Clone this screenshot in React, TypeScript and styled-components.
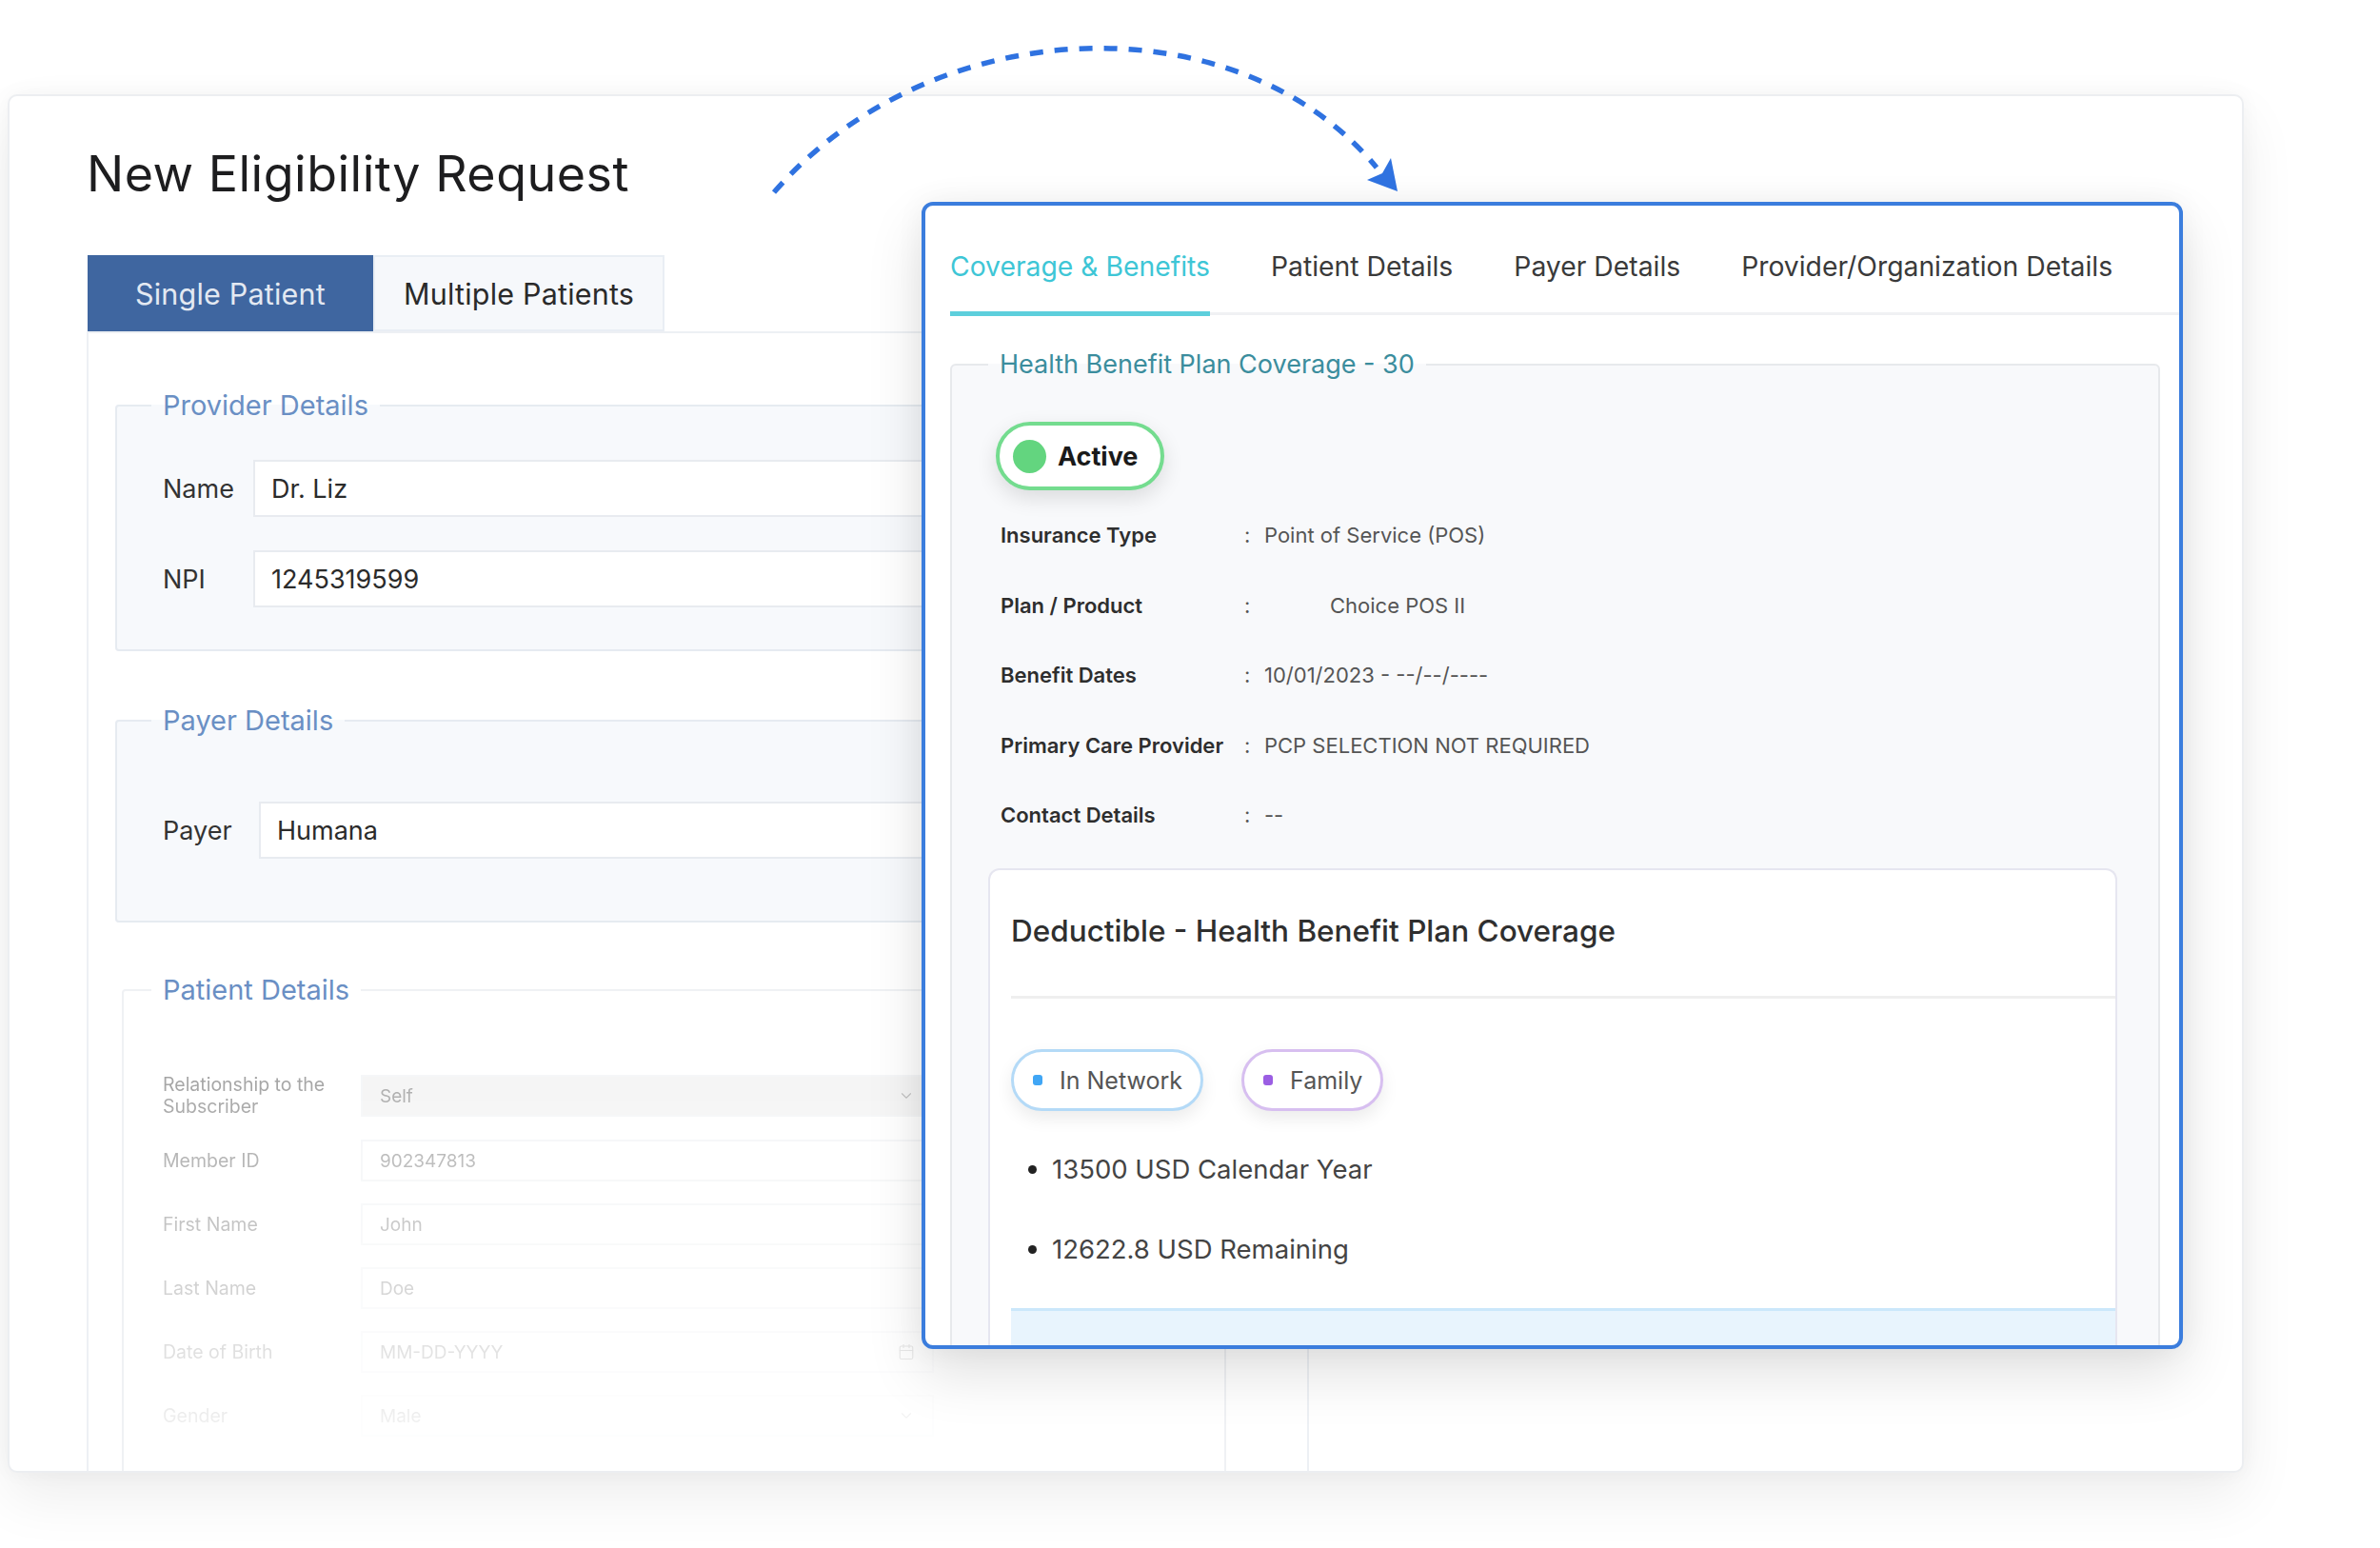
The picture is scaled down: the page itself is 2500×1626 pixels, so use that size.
import React from "react";
import styled, { createGlobalStyle } from "styled-components";
import { ChevronDown, Calendar } from "lucide-react";

const GlobalStyle = createGlobalStyle`
  html, body { margin: 0; padding: 0; background: #ffffff; }
  body { font-family: Inter, "Noto Sans", "Liberation Sans", sans-serif; }
  * { box-sizing: border-box; }
`;

const Page = styled.div`
  position: relative;
  width: 2500px;
  height: 1626px;
  overflow: hidden;
  padding: 99px 0 0 8px;
  background: #fff;
`;

const Card = styled.div`
  width: 2349px;
  height: 1448px;
  border: 2px solid #eceef1;
  border-radius: 10px;
  background: #fff;
  box-shadow: 0 26px 60px rgba(0, 0, 0, 0.07), 0 0 22px rgba(0, 0, 0, 0.04);
  padding: 51px 0 0 81px;
  overflow: hidden;
  display: flex;
  flex-direction: column;
`;

const Title = styled.h1`
  margin: 0;
  font-size: 52px;
  font-weight: 400;
  line-height: 62px;
  color: #1d1d1f;
  letter-spacing: 0.5px;
`;

const TabBar = styled.div`
  display: flex;
  margin: 54px 0 0 1px;
`;

const Tab = styled.div<{ $active?: boolean }>`
  min-width: 300px;
  height: 80px;
  padding: 0 30px;
  display: flex;
  align-items: center;
  justify-content: center;
  font-size: 30.5px;
  letter-spacing: 0.2px;
  background: ${(p) => (p.$active ? "#3f66a0" : "#f6f8fb")};
  color: ${(p) => (p.$active ? "#e3e9f2" : "#2a2a2a")};
  border: ${(p) => (p.$active ? "none" : "2px solid #e9eef4")};
`;

const FormPanel = styled.div`
  width: 1284px;
  flex: 1;
  border: 2px solid #edf0f4;
  border-bottom: none;
  padding: 59px 85px 0 28px;
  display: flex;
  flex-direction: column;
`;

const Fieldset = styled.fieldset<{ $plain?: boolean; $gap?: number; $indent?: number }>`
  margin: ${(p) => p.$gap ?? 0}px 0 0 ${(p) => p.$indent ?? 0}px;
  border: 2px solid ${(p) => (p.$plain ? "#eff1f4" : "#e6ebf1")};
  border-radius: 4px;
  background: ${(p) => (p.$plain ? "#ffffff" : "#f7f9fc")};
  padding: 0 0 0 ${(p) => 48 - (p.$indent ?? 0)}px;
  min-width: 0;
`;

const Legend = styled.legend`
  font-size: 29px;
  line-height: 34px;
  color: #6a8fc4;
  padding: 0 12px;
  margin-left: -12px;
`;

const FieldGrid = styled.div<{ $label: number; $top: number; $bottom: number }>`
  display: grid;
  grid-template-columns: ${(p) => p.$label}px 1fr;
  row-gap: 35px;
  align-items: center;
  padding: ${(p) => p.$top}px 0 ${(p) => p.$bottom}px 0;
`;

const FieldLabel = styled.div`
  font-size: 27px;
  color: #333;
`;

const TextBox = styled.div`
  height: 60px;
  border: 2px solid #e8ebf0;
  background: #fff;
  padding: 0 17px;
  display: flex;
  align-items: center;
  font-size: 27px;
  color: #2b2b2b;
`;

const PatientGrid = styled.div`
  display: grid;
  grid-template-columns: 208px 602px;
  row-gap: 23px;
  align-items: center;
  padding: 71px 0 40px 0;
  -webkit-mask-image: linear-gradient(to bottom, rgba(0, 0, 0, 0.62), rgba(0, 0, 0, 0.08) 92%);
  mask-image: linear-gradient(to bottom, rgba(0, 0, 0, 0.62), rgba(0, 0, 0, 0.08) 92%);
`;

const SmallLabel = styled.div`
  font-size: 19.5px;
  line-height: 23px;
  color: #555;
`;

const SmallBox = styled.div<{ $filled?: boolean }>`
  height: 44px;
  border: 2px solid #eceef1;
  background: ${(p) => (p.$filled ? "#ececec" : "#fff")};
  padding: 0 18px 0 18px;
  display: flex;
  align-items: center;
  justify-content: space-between;
  font-size: 19px;
  color: #666;
`;

/* ---------- Result panel ---------- */

const ResultPanel = styled.div`
  position: absolute;
  left: 968px;
  top: 212px;
  width: 1325px;
  height: 1205px;
  border: 4px solid #3b7ddd;
  border-radius: 12px;
  background: #fff;
  box-shadow: 0 26px 60px rgba(0, 0, 0, 0.12), 0 0 30px rgba(0, 0, 0, 0.05);
  overflow: hidden;
  display: flex;
  flex-direction: column;
`;

const PanelTabs = styled.div`
  display: flex;
  gap: 64px;
  margin-left: 26px;
  padding-top: 47px;
  border-bottom: 3px solid #f0f1f3;
`;

const PanelTab = styled.div<{ $active?: boolean }>`
  font-size: 28.3px;
  line-height: 34px;
  padding-bottom: 30px;
  margin-bottom: -4px;
  color: ${(p) => (p.$active ? "#3ec6d6" : "#3a3a3a")};
  border-bottom: 5px solid ${(p) => (p.$active ? "#5dcfdc" : "transparent")};
`;

const CoverageBox = styled.fieldset`
  flex-shrink: 0;
  height: 1100px;
  margin: 35px 20px 0 26px;
  border: 2px solid #e7e9ec;
  border-radius: 6px;
  background: #f8f9fb;
  padding: 0 0 0 46px;
  min-width: 0;
  display: flex;
  flex-direction: column;
`;

const CoverageLegend = styled.legend`
  font-size: 27px;
  line-height: 34px;
  color: #3b8d9d;
  padding: 0 12px;
  margin-left: -8px;
`;

const ActivePill = styled.div`
  align-self: flex-start;
  margin-top: 43px;
  height: 72px;
  display: inline-flex;
  align-items: center;
  gap: 12px;
  padding: 0 24px 0 14px;
  border: 4px solid #74dc8f;
  border-radius: 40px;
  background: #fff;
  box-shadow: 0 8px 22px rgba(0, 0, 0, 0.12);
  font-size: 27px;
  font-weight: 700;
  color: #1a1a1a;
`;

const GreenDot = styled.span`
  width: 35px;
  height: 35px;
  border-radius: 50%;
  background: #63d57f;
`;

const InfoGrid = styled.div`
  display: grid;
  grid-template-columns: 256px 21px 1fr;
  row-gap: 43.5px;
  margin: 32px 0 0 5px;
  line-height: 30px;
  font-size: 22px;
`;

const InfoLabel = styled.div`
  font-weight: 600;
  font-size: 22px;
  color: #2e2e2e;
  white-space: nowrap;
`;

const InfoColon = styled.div`
  color: #555;
`;

const InfoValue = styled.div<{ $indent?: number }>`
  color: #555;
  padding-left: ${(p) => p.$indent ?? 0}px;
`;

const DedCard = styled.div`
  flex: 1;
  margin: 41px 43px 0 -8px;
  border: 2px solid #e6e6f0;
  border-bottom: none;
  border-radius: 12px 12px 0 0;
  background: #fff;
  display: flex;
  flex-direction: column;
`;

const DedHeader = styled.div`
  margin-left: 22px;
  padding: 45px 0 49px 0;
  border-bottom: 3px solid #efefef;
  font-size: 31.5px;
  line-height: 38px;
  font-weight: 500;
  color: #2f2f2f;
`;

const ChipRow = styled.div`
  display: flex;
  gap: 40px;
  margin: 53px 0 0 22px;
`;

const Chip = styled.div<{ $border: string; $dot: string }>`
  height: 65px;
  display: inline-flex;
  align-items: center;
  gap: 18px;
  padding: 0 19px 0 20px;
  border: 3px solid ${(p) => p.$border};
  border-radius: 34px;
  background: #fff;
  box-shadow: 0 8px 18px rgba(0, 0, 0, 0.08);
  font-size: 25px;
  color: #555;
  &::before {
    content: "";
    width: 10px;
    height: 11px;
    border-radius: 3px;
    background: ${(p) => p.$dot};
  }
`;

const BulletList = styled.ul`
  margin: 43px 0 0 22px;
  padding-left: 43px;
  display: flex;
  flex-direction: column;
  gap: 48px;
  font-size: 27.5px;
  line-height: 36px;
  color: #444;
  li::marker {
    color: #222;
  }
`;

const InfoStrip = styled.div`
  margin: 44px 0 0 22px;
  height: 80px;
  background: #e8f4fd;
  border-top: 3px solid #cbe7fb;
`;

const ArrowLayer = styled.svg`
  position: absolute;
  left: 0;
  top: 0;
  width: 2500px;
  height: 300px;
  pointer-events: none;
`;

const providerRows = [
  { label: "Name", value: "Dr. Liz" },
  { label: "NPI", value: "1245319599" },
];

const patientRows: { label: string; value: string; kind?: "select" | "date"; filled?: boolean }[] = [
  { label: "Relationship to the Subscriber", value: "Self", kind: "select", filled: true },
  { label: "Member ID", value: "902347813" },
  { label: "First Name", value: "John" },
  { label: "Last Name", value: "Doe" },
  { label: "Date of Birth", value: "MM-DD-YYYY", kind: "date" },
  { label: "Gender", value: "Male", kind: "select" },
];

const infoRows: { label: string; value: string; indent?: number }[] = [
  { label: "Insurance Type", value: "Point of Service (POS)" },
  { label: "Plan / Product", value: "Choice POS II", indent: 69 },
  { label: "Benefit Dates", value: "10/01/2023 - --/--/----" },
  { label: "Primary Care Provider", value: "PCP SELECTION NOT REQUIRED" },
  { label: "Contact Details", value: "--" },
];

export default function App() {
  return (
    <>
      <GlobalStyle />
      <Page>
        <Card>
          <Title>New Eligibility Request</Title>
          <TabBar>
            <Tab $active>Single Patient</Tab>
            <Tab>Multiple Patients</Tab>
          </TabBar>
          <FormPanel>
            <Fieldset>
              <Legend>Provider Details</Legend>
              <FieldGrid $label={95} $top={40} $bottom={44}>
                {providerRows.map((r) => (
                  <React.Fragment key={r.label}>
                    <FieldLabel>{r.label}</FieldLabel>
                    <TextBox>{r.value}</TextBox>
                  </React.Fragment>
                ))}
              </FieldGrid>
            </Fieldset>
            <Fieldset $gap={56}>
              <Legend>Payer Details</Legend>
              <FieldGrid $label={101} $top={68} $bottom={65}>
                <FieldLabel>Payer</FieldLabel>
                <TextBox>Humana</TextBox>
              </FieldGrid>
            </Fieldset>
            <Fieldset $gap={54} $indent={7} $plain>
              <Legend>Patient Details</Legend>
              <PatientGrid>
                {patientRows.map((r) => (
                  <React.Fragment key={r.label}>
                    <SmallLabel>{r.label}</SmallLabel>
                    <SmallBox $filled={r.filled}>
                      <span>{r.value}</span>
                      {r.kind === "select" && <ChevronDown size={18} strokeWidth={1.5} color="#888" />}
                      {r.kind === "date" && <Calendar size={18} strokeWidth={1.5} color="#888" />}
                    </SmallBox>
                  </React.Fragment>
                ))}
              </PatientGrid>
            </Fieldset>
          </FormPanel>
        </Card>

        <ResultPanel>
          <PanelTabs>
            <PanelTab $active>Coverage &amp; Benefits</PanelTab>
            <PanelTab>Patient Details</PanelTab>
            <PanelTab>Payer Details</PanelTab>
            <PanelTab>Provider/Organization Details</PanelTab>
          </PanelTabs>
          <CoverageBox>
            <CoverageLegend>Health Benefit Plan Coverage - 30</CoverageLegend>
            <ActivePill>
              <GreenDot />
              Active
            </ActivePill>
            <InfoGrid>
              {infoRows.map((r) => (
                <React.Fragment key={r.label}>
                  <InfoLabel>{r.label}</InfoLabel>
                  <InfoColon>:</InfoColon>
                  <InfoValue $indent={r.indent}>{r.value}</InfoValue>
                </React.Fragment>
              ))}
            </InfoGrid>
            <DedCard>
              <DedHeader>Deductible - Health Benefit Plan Coverage</DedHeader>
              <ChipRow>
                <Chip $border="#b4daf7" $dot="#40a6f5">In Network</Chip>
                <Chip $border="#d7bff0" $dot="#9b5ee3">Family</Chip>
              </ChipRow>
              <BulletList>
                <li>13500 USD Calendar Year</li>
                <li>12622.8 USD Remaining</li>
              </BulletList>
              <InfoStrip />
            </DedCard>
          </CoverageBox>
        </ResultPanel>

        <ArrowLayer viewBox="0 0 2500 300">
          <path
            d="M 813 202 C 980 10, 1300 0, 1446 176"
            fill="none"
            stroke="#2f72e0"
            strokeWidth={5.5}
            strokeDasharray="14 12"
          />
          <polygon points="1468,201 1436,189 1452,182 1461,166" fill="#2f72e0" />
        </ArrowLayer>
      </Page>
    </>
  );
}
